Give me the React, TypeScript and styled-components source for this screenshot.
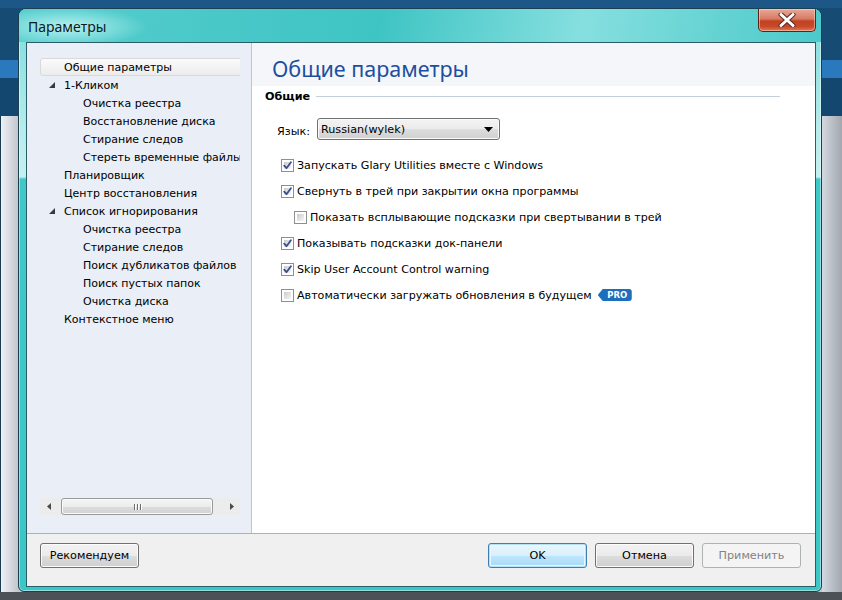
import React from "react";
import styled, { createGlobalStyle, css } from "styled-components";

const Global = createGlobalStyle`
  html, body { margin: 0; padding: 0; }
  body {
    width: 842px;
    height: 600px;
    overflow: hidden;
    font-family: "DejaVu Sans", "Liberation Sans", sans-serif;
    font-size: 11px;
    color: #000;
  }
`;

const Screen = styled.div`
  width: 842px;
  height: 600px;
  box-sizing: border-box;
  padding: 8px 20px 0 18px;
  overflow: hidden;
  background:
    linear-gradient(to bottom, #1d5788 0, #1d5788 8px, transparent 8px),
    linear-gradient(to bottom, transparent 592px, #4b5157 592px),
    linear-gradient(to bottom, #164b74 0, #164b74 60px, #2a79bd 60px, #2a79bd 78px, #134770 78px, #134770 116px, transparent 116px),
    linear-gradient(to right, #1b3c52 0, #1b3c52 1px, #eef1f5 1px, #c3c7cd 18px, #c3c7cd 822px, #d3d9e2 822px, #a3a7ad 842px);
`;

const Window = styled.div`
  width: 804px;
  height: 584px;
  box-sizing: border-box;
  border: 1px solid #1b3f4e;
  border-radius: 8px 8px 6px 6px;
  display: flex;
  flex-direction: column;
  overflow: hidden;
  background: linear-gradient(
    to bottom,
    #5ccfcf 0,
    #8be0e0 34px,
    #b6ecec 120px,
    #c4f0f0 168px,
    #40c8c8 170px,
    #3cc6c6 100%
  );
  box-shadow: inset 0 0 0 1px rgba(255, 255, 255, 0.45);
`;

const TitleBar = styled.div`
  height: 33px;
  flex: none;
  display: flex;
  align-items: flex-start;
  padding: 0 5px 0 9px;
  background:
    radial-gradient(ellipse 80px 20px at 48px 18px, rgba(200, 248, 248, 0.85), rgba(200, 248, 248, 0) 100%),
    linear-gradient(100deg, #57cdcd 0%, #3fc4c4 45%, #86dfdf 70%, #4cc9c9 100%);
`;

const TitleText = styled.div`
  margin-top: 9px;
  font-family: "Noto Sans", "Open Sans", sans-serif;
  font-size: 14px;
  line-height: 18px;
  color: #0c1a1c;
`;

const CloseButton = styled.div`
  margin-left: auto;
  width: 58px;
  height: 23px;
  box-sizing: border-box;
  border: 1px solid #5a2318;
  border-top: none;
  border-radius: 0 0 5px 5px;
  display: flex;
  align-items: center;
  justify-content: center;
  background: linear-gradient(to bottom, #e9a898 0%, #d77a64 45%, #c2401f 55%, #c84a2a 80%, #e07a58 100%);
  box-shadow: inset 0 0 0 1px rgba(255, 220, 210, 0.5);
`;

const Client = styled.div`
  flex: 1;
  margin: 0 5px 4px 7px;
  border: 1px solid #2b5c68;
  background: #f0f0f0;
  display: flex;
  flex-direction: column;
  min-height: 0;
`;

const Main = styled.div`
  flex: 1;
  display: flex;
  min-height: 0;
`;

const LeftPanel = styled.div`
  width: 225px;
  flex: none;
  box-sizing: border-box;
  border-right: 1px solid #bcc6d3;
  background: #e9eef7;
  padding: 15px 0 18px 13px;
  display: flex;
  flex-direction: column;
`;

const Tree = styled.div`
  width: 200px;
  flex: 1;
  overflow: hidden;
`;

const TreeList = styled.div`
  width: 240px;
`;

const TreeRow = styled.div<{ $level: number; $selected?: boolean }>`
  height: 18px;
  box-sizing: border-box;
  display: flex;
  align-items: center;
  padding-left: ${(p) => 8 + p.$level * 19}px;
  white-space: nowrap;
  font-size: 11px;
  border: 1px solid transparent;
  border-radius: 3px;
  ${(p) =>
    p.$selected &&
    css`
      background: linear-gradient(to bottom, #fbfbfb, #ececec);
      border-color: #d9d9d9;
    `}
`;

const Expander = styled.span`
  width: 15px;
  flex: none;
  display: flex;
  align-items: center;
`;

const Scrollbar = styled.div`
  width: 200px;
  height: 17px;
  flex: none;
  display: flex;
  background: #ececec;
`;

const ScrollArrow = styled.div`
  width: 17px;
  flex: none;
  display: flex;
  align-items: center;
  justify-content: center;
`;

const ScrollTrack = styled.div`
  flex: 1;
  display: flex;
  align-items: stretch;
  padding: 0 2px 0 4px;
`;

const ScrollThumb = styled.div`
  width: 152px;
  box-sizing: border-box;
  border: 1px solid #9a9a9a;
  border-radius: 3px;
  background: linear-gradient(to bottom, #f5f5f5 0%, #ececec 50%, #dcdcdc 51%, #d2d2d2 100%);
  box-shadow: inset 0 0 0 1px #fafafa;
  display: flex;
  align-items: center;
  justify-content: center;
  gap: 2px;
`;

const Grip = styled.span`
  width: 1px;
  height: 6px;
  background: #6e6e6e;
  box-shadow: 1px 0 0 #fff;
`;

const RightPanel = styled.div`
  flex: 1;
  background: #fff;
  display: flex;
  flex-direction: column;
`;

const HeaderBand = styled.div`
  height: 43px;
  flex: none;
  background: #f5f6fa;
  padding: 11px 0 0 20px;
  box-sizing: border-box;
`;

const Heading = styled.div`
  font-family: "Noto Sans", "Open Sans", sans-serif;
  font-size: 21.5px;
  line-height: 30px;
  color: #1d4f9f;
`;

const SectionRow = styled.div`
  height: 20px;
  display: flex;
  align-items: center;
  padding-left: 13px;
  padding-right: 35px;
`;

const SectionTitle = styled.span`
  font-weight: bold;
  font-size: 11.2px;
`;

const SectionLine = styled.span`
  flex: 1;
  height: 1px;
  margin-left: 6px;
  background: #c3d0de;
`;

const LangRow = styled.div`
  margin-top: 12px;
  display: flex;
  align-items: center;
  padding-left: 25px;
`;

const LangLabel = styled.span`
  width: 40px;
  padding-top: 4px;
  font-size: 11.2px;
`;

const Select = styled.div`
  width: 183px;
  height: 22px;
  box-sizing: border-box;
  border: 1px solid #707070;
  border-radius: 3px;
  background: linear-gradient(to bottom, #f3f3f3 0%, #ebebeb 50%, #dddddd 51%, #d0d0d0 100%);
  box-shadow: inset 0 0 0 1px #fbfbfb;
  display: flex;
  align-items: center;
  padding: 0 6px 0 3px;
  font-size: 11.2px;
`;

const SelectValue = styled.span`
  flex: 1;
`;

const Options = styled.div`
  margin-top: 12px;
  display: flex;
  flex-direction: column;
`;

const OptionRow = styled.div<{ $indent?: boolean }>`
  height: 26px;
  display: flex;
  align-items: center;
  padding-left: ${(p) => (p.$indent ? 42 : 29)}px;
  font-size: 11.1px;
  white-space: nowrap;
`;

const CheckBox = styled.span`
  width: 13px;
  height: 13px;
  flex: none;
  box-sizing: border-box;
  border: 1px solid #8e8f8f;
  margin-right: 3px;
  background: #fff;
  position: relative;
  display: flex;
  align-items: center;
  justify-content: center;
  &::before {
    content: "";
    position: absolute;
    inset: 2px;
    background: linear-gradient(135deg, #cbcbcb, #f6f6f6);
  }
  svg {
    position: relative;
  }
`;

const ProBadge = styled.span`
  margin-left: 6px;
  width: 34px;
  height: 12px;
  box-sizing: border-box;
  padding-left: 5px;
  display: inline-flex;
  align-items: center;
  justify-content: center;
  background: #1d6fbe;
  color: #fff;
  font-size: 8.5px;
  font-weight: bold;
  border-radius: 0 3px 3px 0;
  clip-path: polygon(5px 0, 100% 0, 100% 100%, 5px 100%, 0 50%);
`;

const BottomBar = styled.div`
  height: 53px;
  flex: none;
  box-sizing: border-box;
  border-top: 1px solid #a9b1ba;
  background: #f0f0f0;
  padding: 9px 14px 0 13px;
  display: flex;
  align-items: flex-start;
  gap: 8px;
`;

const Button = styled.div<{ $variant?: "default" | "disabled"; $push?: boolean }>`
  width: 99px;
  height: 25px;
  box-sizing: border-box;
  border: 1px solid #707070;
  border-radius: 3px;
  display: flex;
  align-items: center;
  justify-content: center;
  font-size: 11.2px;
  color: #000;
  background: linear-gradient(to bottom, #f2f2f2 0%, #ebebeb 50%, #dddddd 51%, #cfcfcf 100%);
  box-shadow: inset 0 0 0 1px #fcfcfc;
  ${(p) => p.$push && css`margin-left: auto;`}
  ${(p) =>
    p.$variant === "default" &&
    css`
      border-color: #3c7fb1;
      background: linear-gradient(to bottom, #eaf6fd 0%, #d9f0fc 50%, #bee6fd 51%, #a7d9f5 100%);
      box-shadow: inset 0 0 0 1px #b4e1f8, inset 0 0 0 2px #e9f6fd;
    `}
  ${(p) =>
    p.$variant === "disabled" &&
    css`
      border-color: #adb2b5;
      background: #f4f4f4;
      box-shadow: none;
      color: #838383;
    `}
`;

const Triangle = () => (
  <svg width="6" height="6" viewBox="0 0 6 6">
    <polygon points="6,0 6,6 0,6" fill="#3a3a3a" />
  </svg>
);

const CheckMark = () => (
  <svg width="9" height="9" viewBox="0 0 9 9">
    <path d="M1.2 4.6 L3.5 7.2 L7.9 1.2" fill="none" stroke="#3b4f8c" strokeWidth="1.8" strokeLinecap="round" strokeLinejoin="round" />
  </svg>
);

type TreeItem = { label: string; level: number; expanded?: boolean; selected?: boolean };

const treeItems: TreeItem[] = [
  { label: "Общие параметры", level: 0, selected: true },
  { label: "1-Кликом", level: 0, expanded: true },
  { label: "Очистка реестра", level: 1 },
  { label: "Восстановление диска", level: 1 },
  { label: "Стирание следов", level: 1 },
  { label: "Стереть временные файлы", level: 1 },
  { label: "Планировщик", level: 0 },
  { label: "Центр восстановления", level: 0 },
  { label: "Список игнорирования", level: 0, expanded: true },
  { label: "Очистка реестра", level: 1 },
  { label: "Стирание следов", level: 1 },
  { label: "Поиск дубликатов файлов", level: 1 },
  { label: "Поиск пустых папок", level: 1 },
  { label: "Очистка диска", level: 1 },
  { label: "Контекстное меню", level: 0 },
];

type Option = { label: string; checked: boolean; indent?: boolean; pro?: boolean };

const options: Option[] = [
  { label: "Запускать Glary Utilities вместе с Windows", checked: true },
  { label: "Свернуть в трей при закрытии окна программы", checked: true },
  { label: "Показать всплывающие подсказки при свертывании в трей", checked: false, indent: true },
  { label: "Показывать подсказки док-панели", checked: true },
  { label: "Skip User Account Control warning", checked: true },
  { label: "Автоматически загружать обновления в будущем", checked: false, pro: true },
];

export default function App() {
  return (
    <>
      <Global />
      <Screen>
        <Window>
          <TitleBar>
            <TitleText>Параметры</TitleText>
            <CloseButton>
              <svg width="18" height="14" viewBox="0 0 18 14">
                <path
                  d="M3 1.5 L15 12.5 M15 1.5 L3 12.5"
                  stroke="#5a2a22"
                  strokeWidth="5"
                  strokeLinecap="round"
                />
                <path
                  d="M3 1.5 L15 12.5 M15 1.5 L3 12.5"
                  stroke="#ffffff"
                  strokeWidth="3"
                  strokeLinecap="round"
                />
              </svg>
            </CloseButton>
          </TitleBar>
          <Client>
            <Main>
              <LeftPanel>
                <Tree>
                  <TreeList>
                    {treeItems.map((it, i) => (
                      <TreeRow key={i} $level={it.level} $selected={it.selected}>
                        <Expander>{it.expanded && <Triangle />}</Expander>
                        {it.label}
                      </TreeRow>
                    ))}
                  </TreeList>
                </Tree>
                <Scrollbar>
                  <ScrollArrow>
                    <svg width="4" height="7" viewBox="0 0 4 7">
                      <polygon points="4,0 4,7 0,3.5" fill="#4a4a4a" />
                    </svg>
                  </ScrollArrow>
                  <ScrollTrack>
                    <ScrollThumb>
                      <Grip />
                      <Grip />
                      <Grip />
                    </ScrollThumb>
                  </ScrollTrack>
                  <ScrollArrow>
                    <svg width="4" height="7" viewBox="0 0 4 7">
                      <polygon points="0,0 4,3.5 0,7" fill="#4a4a4a" />
                    </svg>
                  </ScrollArrow>
                </Scrollbar>
              </LeftPanel>
              <RightPanel>
                <HeaderBand>
                  <Heading>Общие параметры</Heading>
                </HeaderBand>
                <SectionRow>
                  <SectionTitle>Общие</SectionTitle>
                  <SectionLine />
                </SectionRow>
                <LangRow>
                  <LangLabel>Язык:</LangLabel>
                  <Select>
                    <SelectValue>Russian(wylek)</SelectValue>
                    <svg width="9" height="5" viewBox="0 0 9 5">
                      <polygon points="0,0 9,0 4.5,5" fill="#000" />
                    </svg>
                  </Select>
                </LangRow>
                <Options>
                  {options.map((o, i) => (
                    <OptionRow key={i} $indent={o.indent}>
                      <CheckBox>{o.checked && <CheckMark />}</CheckBox>
                      {o.label}
                      {o.pro && <ProBadge>PRO</ProBadge>}
                    </OptionRow>
                  ))}
                </Options>
              </RightPanel>
            </Main>
            <BottomBar>
              <Button>Рекомендуем</Button>
              <Button $variant="default" $push>
                OK
              </Button>
              <Button>Отмена</Button>
              <Button $variant="disabled">Применить</Button>
            </BottomBar>
          </Client>
        </Window>
      </Screen>
    </>
  );
}
